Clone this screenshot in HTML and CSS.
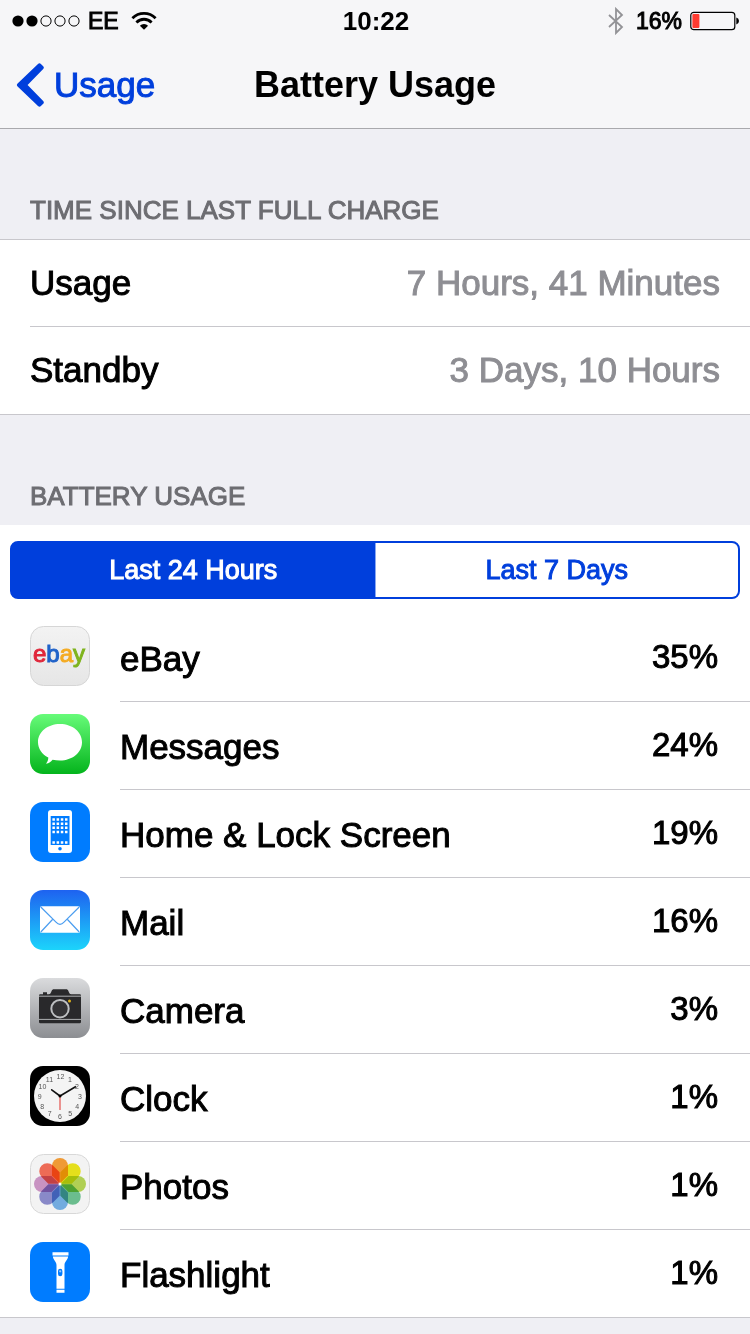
FILE: index.html
```
<!DOCTYPE html>
<html lang="en">
<head>
  <meta charset="UTF-8" />
  <meta name="viewport" content="width=device-width, initial-scale=1.0" />
  <title>Battery Usage</title>
  <link rel="stylesheet" href="styles.css">
</head>
<body>
  <header class="top">
    <div class="status">
      <div class="status-left">
        <svg class="signal" width="68" height="12" viewBox="0 0 68 12" aria-hidden="true">
          <circle cx="6" cy="6" r="5.6"/>
          <circle cx="20" cy="6" r="5.6"/>
          <g fill="none" stroke="#000" stroke-width="1"><circle cx="34" cy="6" r="5.1"/><circle cx="48" cy="6" r="5.1"/><circle cx="62" cy="6" r="5.1"/></g>
        </svg>
        <span>EE</span>
        <svg class="wifi" width="26" height="18" viewBox="0 0 26 18" aria-hidden="true">
          <g fill="none" stroke="#000" stroke-width="2.8">
            <path d="M1.4 6.2a16.6 16.6 0 0 1 23.2 0"/>
            <path d="M5.4 10.4a10.8 10.8 0 0 1 15.2 0"/>
          </g>
          <path d="M8.9 13.7a5.8 5.8 0 0 1 8.2 0L13 17.8z"/>
        </svg>
      </div>
      <span class="time">10:22</span>
      <div class="status-right">
        <svg width="16" height="28" viewBox="0 0 16 28" aria-hidden="true">
          <path d="M1 8l13 12-6 6V2l6 6L1 20" fill="none" stroke="#929296" stroke-width="1.8"/>
        </svg>
        <span class="charge">16%</span>
        <svg width="50" height="20" viewBox="0 0 50 20" aria-hidden="true">
          <rect x="0.8" y="1.3" width="44" height="17.4" rx="3" fill="none" stroke="#000" stroke-width="1.2"/>
          <rect x="2.4" y="3" width="7" height="14" rx="1" fill="#ff3b30"/>
          <path d="M46.3 6.5q2.7.8 2.7 3.5t-2.7 3.5z"/>
        </svg>
      </div>
    </div>
    <nav class="navbar">
      <a class="back" href="#">
        <svg width="28" height="44" viewBox="0 0 28 44" aria-hidden="true">
          <path d="M22 .9q1.500-1.300 2.900 0L27.200 3.200q1.300 1.400 0 2.800L11.600 22 27.200 38q1.300 1.400 0 2.800L24.900 43.100q-1.400 1.300-2.900 0L1.600 23.600q-1.500-1.600 0-3.200z" fill="#003fdc"/>
        </svg>
        <span>Usage</span>
      </a>
      <h1>Battery Usage</h1>
    </nav>
  </header>

  <main>
    <h2>TIME SINCE LAST FULL CHARGE</h2>
    <dl class="times">
      <div class="time-row"><dt>Usage</dt><dd>7 Hours, 41 Minutes</dd></div>
      <div class="time-row"><dt>Standby</dt><dd>3 Days, 10 Hours</dd></div>
    </dl>

    <h2>BATTERY USAGE</h2>
    <section class="usage">
      <div class="segments">
        <button type="button" class="segment active" aria-pressed="true">Last 24 Hours</button>
        <button type="button" class="segment" aria-pressed="false">Last 7 Days</button>
      </div>

      <ul class="apps">
        <li>
          <svg class="icon" viewBox="0 0 60 60" aria-hidden="true">
            <defs><linearGradient id="ebay" x2="0" y2="1"><stop stop-color="#f3f3f3"/><stop offset="1" stop-color="#e6e6e6"/></linearGradient></defs>
            <rect x="0.5" y="0.5" width="59" height="59" rx="13" fill="url(#ebay)" stroke="#d6d6d6"/>
            <text x="3" y="36" class="ebay-logo"><tspan fill="#e0263a" stroke="#e0263a">e</tspan><tspan fill="#1f62c9" stroke="#1f62c9">b</tspan><tspan fill="#f4ab22" stroke="#f4ab22">a</tspan><tspan fill="#7fb41e" stroke="#7fb41e">y</tspan></text>
          </svg>
          <div class="app"><span>eBay</span><span class="percent">35%</span></div>
        </li>
        <li>
          <svg class="icon" viewBox="0 0 60 60" aria-hidden="true">
            <defs><linearGradient id="messages" x2="0" y2="1"><stop stop-color="#67fb79"/><stop offset="1" stop-color="#04b41c"/></linearGradient></defs>
            <rect width="60" height="60" rx="13" fill="url(#messages)"/>
            <path d="M30 10c12.400 0 22 8 22 18.200S42.400 46.500 30 46.500c-2.600 0-5-.2-7.400-.8-1.800 2-4 3.800-6.800 4.100 1.600-1.600 2.500-3.800 2.500-6.200C11.900 40.200 8 34.500 8 28.200 8 18 17.600 10 30 10z" fill="#fff"/>
          </svg>
          <div class="app"><span>Messages</span><span class="percent">24%</span></div>
        </li>
        <li>
          <svg class="icon" viewBox="0 0 60 60" aria-hidden="true">
            <rect width="60" height="60" rx="13" fill="#007cff"/>
            <rect x="18" y="8" width="24" height="43" rx="3" fill="#fff"/>
            <rect x="20.700" y="14" width="18.800" height="29" fill="#007cff"/>
            <g stroke="#fff" stroke-width="2.500" stroke-dasharray="2.500 1.700">
              <path d="M22.400 17.600h15.200M22.400 21.700h15.200M22.400 25.800h15.200M22.400 29.900h15.200M22.400 40.400h15.200"/>
            </g>
            <circle cx="30" cy="46.800" r="1.800" fill="#007cff"/>
          </svg>
          <div class="app"><span>Home &amp; Lock Screen</span><span class="percent">19%</span></div>
        </li>
        <li>
          <svg class="icon" viewBox="0 0 60 60" aria-hidden="true">
            <defs><linearGradient id="mail" x2="0" y2="1"><stop stop-color="#1e62f0"/><stop offset="1" stop-color="#1cd4fb"/></linearGradient></defs>
            <rect width="60" height="60" rx="13" fill="url(#mail)"/>
            <rect x="10" y="16.200" width="40" height="26.600" rx="1.500" fill="#fff"/>
            <path d="M10.800 17L26 32.200q4 4.200 8 0L49.200 17M22.500 29.500L10.800 42M37.500 29.500L49.200 42" fill="none" stroke="#4a9df0" stroke-width="1.200"/>
          </svg>
          <div class="app"><span>Mail</span><span class="percent">16%</span></div>
        </li>
        <li>
          <svg class="icon" viewBox="0 0 60 60" aria-hidden="true">
            <defs><linearGradient id="camera" x2="0" y2="1"><stop stop-color="#dadbdd"/><stop offset="1" stop-color="#8c8e92"/></linearGradient></defs>
            <rect width="60" height="60" rx="13" fill="url(#camera)"/>
            <path d="M13 14.200h4v2h-4zM9 17.500q0-1.300 1.300-1.300h8.400c1.700 0 2-1.200 2.800-3 .6-1.400 1.200-1.900 2.500-1.900h12c1.300 0 1.900.5 2.500 1.900.8 1.800 1.100 3 2.800 3h8.400q1.300 0 1.300 1.300v26.400q0 1.400-1.400 1.400H10.400Q9 45.300 9 43.900z" fill="#29292b"/>
            <path d="M9 18.200h42M9 41.400h42" stroke="#aeb0b2" stroke-width="1"/>
            <circle cx="30" cy="30.700" r="10.200" fill="#29292b"/>
            <circle cx="30" cy="30.700" r="8.700" fill="#333335" stroke="#bdbfc1" stroke-width="2"/>
            <circle cx="39.500" cy="23" r="1.500" fill="#dfb21c"/>
          </svg>
          <div class="app"><span>Camera</span><span class="percent">3%</span></div>
        </li>
        <li>
          <svg class="icon" viewBox="0 0 60 60" aria-hidden="true">
            <rect width="60" height="60" rx="13"/>
            <circle cx="30" cy="30" r="26" fill="#f4f4f4"/>
            <g class="clock-numbers">
              <text x="30.500" y="12.500">12</text><text x="40" y="15.500">1</text><text x="47" y="22.500">2</text><text x="50" y="32.500">3</text>
              <text x="47.300" y="43">4</text><text x="40.300" y="50">5</text><text x="30" y="52.500">6</text><text x="19.600" y="50">7</text>
              <text x="12.300" y="43">8</text><text x="9.800" y="32.500">9</text><text x="12.500" y="22.500">10</text><text x="19.500" y="15.500">11</text>
            </g>
            <path d="M30 30l-8.300-6.200M30 30l15.500-9.200" stroke="#111" stroke-width="1.600" stroke-linecap="round"/>
            <path d="M30 30v14" stroke="#e0302a" stroke-width="1"/>
            <circle cx="30" cy="30" r="1.500"/>
          </svg>
          <div class="app"><span>Clock</span><span class="percent">1%</span></div>
        </li>
        <li>
          <svg class="icon" viewBox="0 0 60 60" aria-hidden="true">
            <defs><path id="petal" d="M22 12a8 8 0 0 1 16 0v9.500L30 29.500l-8-8z"/></defs>
            <rect x="0.500" y="0.500" width="59" height="59" rx="13" fill="#f3f3f3" stroke="#d8d8d8"/>
            <g class="petals">
              <use href="#petal" fill="#fba238"/>
              <use href="#petal" fill="#f1ea1c" transform="rotate(45 30 30)"/>
              <use href="#petal" fill="#b9da58" transform="rotate(90 30 30)"/>
              <use href="#petal" fill="#70c795" transform="rotate(135 30 30)"/>
              <use href="#petal" fill="#78b4ea" transform="rotate(180 30 30)"/>
              <use href="#petal" fill="#9090d2" transform="rotate(225 30 30)"/>
              <use href="#petal" fill="#d29acc" transform="rotate(270 30 30)"/>
              <use href="#petal" fill="#f9705a" transform="rotate(315 30 30)"/>
            </g>
            <circle cx="30" cy="30" r="1.500" fill="#fff"/>
          </svg>
          <div class="app"><span>Photos</span><span class="percent">1%</span></div>
        </li>
        <li>
          <svg class="icon" viewBox="0 0 60 60" aria-hidden="true">
            <rect width="60" height="60" rx="13" fill="#007cff"/>
            <path d="M22.500 10.200h16v3.300h-16zM22.900 14.400h15.200c-.2 3.300-3.600 5-3.600 8.600v23.700h-8V23c0-3.600-3.400-5.300-3.600-8.600zM26.500 47.700h8v3h-8z" fill="#fff"/>
            <rect x="28" y="26.700" width="4.400" height="7.600" rx="2.200" fill="#007cff"/>
            <circle cx="30.200" cy="29.300" r="1.100" fill="#9bcbff"/>
          </svg>
          <div class="app"><span>Flashlight</span><span class="percent">1%</span></div>
        </li>
      </ul>
    </section>
  </main>
</body>
</html>
```

FILE: styles.css
```
* {
  box-sizing: border-box;
}

body {
  margin: 0;
  min-height: 100vh;
  background: #efeff4;
  color: #000;
  font-family: "Liberation Sans", Arial, sans-serif;
  font-size: 35px;
  line-height: 40px;
}

h1, h2, dl, dd, ul {
  margin: 0;
  padding: 0;
}

svg {
  display: block;
  flex: none;
}

.top {
  background: #f6f6f8;
  border-bottom: 1px solid #a9a9ad;
}

.status {
  display: grid;
  grid-template-columns: 1fr auto 1fr;
  align-items: center;
  height: 41px;
  padding: 0 10px 0 12px;
  font-size: 23px;
}

.status-left,
.status-right {
  display: flex;
  align-items: center;
  gap: 8px;
  -webkit-text-stroke: 1px;
}

.status-right {
  justify-content: flex-end;
}

.wifi {
  margin-left: 4px;
}

.charge {
  margin-left: 4px;
}

.time {
  font-size: 26px;
  font-weight: bold;
}

.navbar {
  display: grid;
  grid-template-columns: 1fr auto 1fr;
  align-items: center;
  height: 87px;
  padding: 0 16px;
}

.back {
  display: flex;
  align-items: center;
  gap: 10px;
  color: #003fdc;
  text-decoration: none;
  -webkit-text-stroke: 1px;
}

h1 {
  font-size: 36px;
  line-height: 40px;
}

h2 {
  padding: 64px 30px 12px;
  color: #6d6d72;
  font-size: 26px;
  font-weight: normal;
  line-height: 34px;
  -webkit-text-stroke: 1px;
}

.times {
  padding: 0 0 1px 30px;
  background: #fff;
  border-top: 1px solid #c8c7cc;
  border-bottom: 1px solid #c8c7cc;
}

.time-row {
  display: flex;
  justify-content: space-between;
  padding: 23px 30px 23px 0;
  -webkit-text-stroke: 1px;
}

.time-row + .time-row {
  border-top: 1px solid #c8c7cc;
}

dd {
  color: #8e8e93;
}

.usage {
  padding-top: 16px;
  background: #fff;
  border-bottom: 1px solid #c8c7cc;
}

.segments {
  display: flex;
  margin: 0 10px 15px;
  border: 2px solid #003fdc;
  border-radius: 8px;
  overflow: hidden;
  background: #003fdc;
}

.segment {
  flex: 1;
  height: 54px;
  padding: 0;
  border: 0;
  background: #fff;
  color: #003fdc;
  font: inherit;
  font-size: 27px;
  -webkit-text-stroke: 1px;
}

.segment.active {
  background: #003fdc;
  border-right: 1px solid #8aa8f0;
  color: #fff;
}

.apps {
  list-style: none;
}

.apps li {
  display: flex;
  gap: 30px;
  padding-left: 30px;
}

.icon {
  width: 60px;
  height: 60px;
  margin-top: 12px;
}

.app {
  flex: 1;
  display: flex;
  justify-content: space-between;
  padding: 25px 32px 22px 0;
  border-bottom: 1px solid #c8c7cc;
  -webkit-text-stroke: 1px;
}

.apps li:last-child .app {
  border-bottom: 0;
}

.percent {
  font-size: 33px;
  line-height: 36px;
}

.ebay-logo {
  font-size: 24px;
}

.clock-numbers {
  font-size: 7px;
  text-anchor: middle;
  fill: #555;
}

.petals use {
  mix-blend-mode: multiply;
}
```
